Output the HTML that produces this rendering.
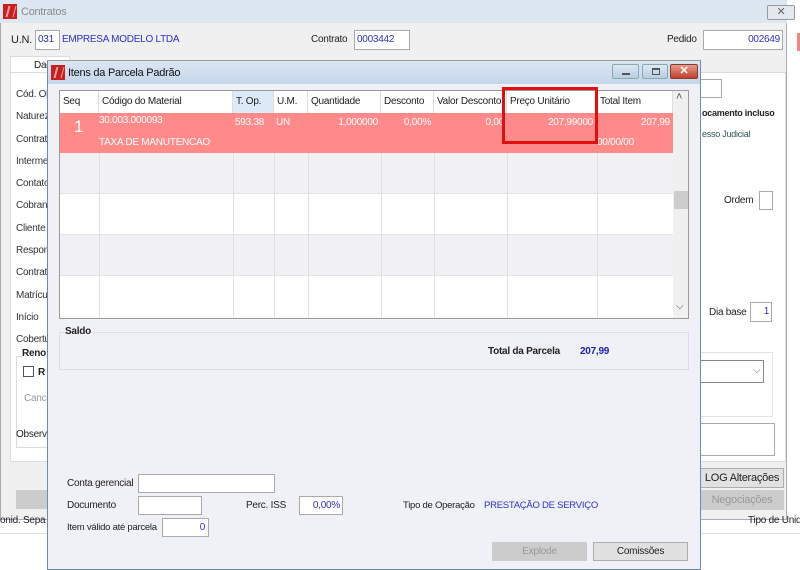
<!DOCTYPE html>
<html><head><meta charset="utf-8"><style>
*{box-sizing:border-box;margin:0;padding:0}
body{width:800px;height:568px;position:relative;overflow:hidden;background:#fff;font-family:"Liberation Sans",sans-serif;font-size:10px;letter-spacing:-0.25px;color:#222;white-space:nowrap}
.a{position:absolute}
.box{position:absolute;background:#fff;border:1px solid #aaa}
.blue{color:#3030c0}
.logo{position:absolute;width:14px;height:15px;background:#c8201c}
.logo:after{content:"";position:absolute;left:4px;top:2px;width:5px;height:11px;border-left:2px solid #f4a0a0;border-right:1px solid #f4a0a0;transform:skewX(-15deg)}
.hd{position:absolute;top:0;height:22px;line-height:22px;padding-left:3px;border-right:1px solid #ddd;font-size:10px;color:#222}
.vl{position:absolute;top:62px;bottom:0;width:1px;background:#e0e0e0}
.btn{position:absolute;border:1px solid #adadad;background:#e1e1e1;text-align:center;font-size:10px}
</style></head><body>
<!-- background window -->
<div class="a" style="left:0;top:0;width:787px;height:520px;background:#f0f0f0;border:1px solid #aab"></div>
<div class="a" style="left:0;top:0;width:787px;height:23px;background:#dde7f2"></div>
<div class="logo" style="left:3px;top:4px"></div>
<div class="a" style="left:21px;top:6px;font-size:11px;color:#8a8a8a">Contratos</div>
<div class="a" style="left:767px;top:5px;width:28px;height:15px;border:1px solid #999;border-radius:2px;background:#e4e8ee;text-align:center;line-height:13px;color:#666;font-size:11px">✕</div>
<div class="a" style="left:797px;top:33px;width:3px;height:18px;background:#e88"></div>
<div class="a" style="left:11px;top:34px;font-size:11px">U.N.</div>
<div class="box blue" style="left:35px;top:30px;width:25px;height:20px;padding:3px 2px;font-size:10px">031</div>
<div class="a blue" style="left:62px;top:34px;font-size:10px">EMPRESA MODELO LTDA</div>
<div class="a" style="left:311px;top:34px;font-size:10px">Contrato</div>
<div class="box blue" style="left:354px;top:30px;width:56px;height:20px;padding:3px 2px">0003442</div>
<div class="a" style="left:667px;top:34px;font-size:10px">Pedido</div>
<div class="box blue" style="left:703px;top:30px;width:80px;height:20px;padding:3px 2px;text-align:right">002649</div>
<div class="a" style="left:10px;top:56px;width:60px;height:16px;background:#fff;border:1px solid #ddd;border-bottom:none"></div>
<div class="a" style="left:34px;top:60px">Dad</div>
<div class="a" style="left:10px;top:72px;width:776px;height:390px;background:#fff;border:1px solid #ddd"></div>
<div class="a" style="left:16px;top:84px;line-height:22.3px;font-size:10px;color:#333">Cód. Ol<br>Naturez<br>Contrat<br>Interme<br>Contato<br>Cobran<br>Cliente<br>Respon<br>Contrat<br>Matrícu<br>Início<br>Cobertu</div>
<div class="a" style="left:16px;top:356px;width:40px;height:92px;border:1px solid #ddd"></div>
<div class="a" style="left:22px;top:348px;font-weight:bold;background:#fff">Reno</div>
<div class="a" style="left:23px;top:366px;width:11px;height:11px;border:1px solid #555"></div>
<div class="a" style="left:38px;top:367px;font-weight:bold">R</div>
<div class="a" style="left:24px;top:393px;color:#999">Cance</div>
<div class="a" style="left:16px;top:429px">Observ</div>
<div class="a" style="left:16px;top:490px;width:40px;height:19px;background:#ccc"></div>
<div class="a" style="left:0;top:515px;font-size:10px">onid. Sepa</div>
<div class="a" style="left:0;top:533px;width:800px;height:1px;background:#ddd"></div>
<div class="box" style="left:700px;top:79px;width:22px;height:19px"></div>
<div class="a" style="left:702px;top:108px;font-weight:bold;font-size:9px">ocamento incluso</div>
<div class="a" style="left:702px;top:129px;font-size:9px;color:#355">esso Judicial</div>
<div class="a" style="left:724px;top:195px">Ordem</div>
<div class="box" style="left:759px;top:191px;width:14px;height:19px"></div>
<div class="a" style="left:709px;top:307px">Dia base</div>
<div class="box blue" style="left:750px;top:302px;width:22px;height:20px;padding:3px 2px;text-align:right">1</div>
<div class="a" style="left:700px;top:352px;width:73px;height:65px;border:1px solid #e4e4e4"></div>
<div class="box" style="left:700px;top:360px;width:64px;height:23px;border-color:#888"></div>
<div class="a" style="left:753px;top:365px;color:#666">⌵</div>
<div class="box" style="left:700px;top:423px;width:75px;height:33px"></div>
<div class="btn" style="left:700px;top:468px;width:84px;height:20px;line-height:18px;font-size:11px">LOG Alterações</div>
<div class="btn" style="left:700px;top:490px;width:84px;height:20px;line-height:18px;color:#999;background:#ccc;border-color:#ccc;font-size:11px">Negociações</div>
<div class="a" style="left:748px;top:515px">Tipo de Unida</div>

<!-- child dialog -->
<div class="a" style="left:47px;top:60px;width:654px;height:510px;background:#f0f1f7;border:1px solid #6a8cb0;border-top-color:#999"></div>
<div class="a" style="left:48px;top:61px;width:652px;height:23px;background:linear-gradient(#dbe6f3,#c5d6ea)"></div>
<div class="logo" style="left:51px;top:65px"></div>
<div class="a" style="left:68px;top:67px;font-size:11px;color:#111">Itens da Parcela Padrão</div>
<div class="a" style="left:612px;top:64px;width:27px;height:15px;border:1px solid #8aa;border-radius:2px;background:linear-gradient(#dde8f4,#b9cde4)"><div class="a" style="left:9px;top:8px;width:8px;height:2px;background:#555"></div></div>
<div class="a" style="left:642px;top:64px;width:26px;height:15px;border:1px solid #8aa;border-radius:2px;background:linear-gradient(#dde8f4,#b9cde4)"><div class="a" style="left:9px;top:3px;width:8px;height:7px;border:1px solid #555;border-top-width:2px"></div></div>
<div class="a" style="left:670px;top:64px;width:28px;height:15px;border:1px solid #8a3a30;border-radius:2px;background:linear-gradient(#e89a8c,#c0402c);color:#fff;text-align:center;font-weight:bold;line-height:13px;font-size:11px">✕</div>

<!-- grid -->
<div class="a" style="left:59px;top:90px;width:630px;height:229px;background:#fff;border:1px solid #999;overflow:hidden">
 <div class="a" style="left:0;top:22px;width:613px;height:40px;background:#fe8a8a"></div>
 <div class="a" style="left:0;top:62px;width:613px;height:41px;background:#f1f1f5"></div>
 <div class="a" style="left:0;top:144px;width:613px;height:41px;background:#f1f1f5"></div>
 <div class="a" style="left:0;top:102px;width:613px;height:1px;background:#e4e4e4"></div>
 <div class="a" style="left:0;top:143px;width:613px;height:1px;background:#e4e4e4"></div>
 <div class="a" style="left:0;top:184px;width:613px;height:1px;background:#e4e4e4"></div>
 <div class="hd" style="left:0;width:39px">Seq</div>
 <div class="hd" style="left:39px;width:134px">Código do Material</div>
 <div class="hd" style="left:173px;width:41px;background:#dceaf7">T. Op.</div>
 <div class="hd" style="left:214px;width:34px">U.M.</div>
 <div class="hd" style="left:248px;width:73px">Quantidade</div>
 <div class="hd" style="left:321px;width:53px">Desconto</div>
 <div class="hd" style="left:374px;width:73px">Valor Desconto</div>
 <div class="hd" style="left:447px;width:90px">Preço Unitário</div>
 <div class="hd" style="left:537px;width:76px">Total Item</div>
 <div class="vl" style="left:39px"></div><div class="vl" style="left:173px"></div><div class="vl" style="left:214px"></div><div class="vl" style="left:248px"></div><div class="vl" style="left:321px"></div><div class="vl" style="left:374px"></div><div class="vl" style="left:447px"></div><div class="vl" style="left:537px"></div>
 <div class="a" style="left:14px;top:26px;color:#fff;font-size:17px">1</div>
 <div class="a" style="left:39px;top:24px;color:#fff">30.003.000093</div>
 <div class="a" style="left:39px;top:46px;color:#fff">TAXA DE MANUTENCAO</div>
 <div class="a" style="left:175px;top:26px;color:#fff">593.38</div>
 <div class="a" style="left:216px;top:26px;color:#fff">UN</div>
 <div class="a" style="left:248px;top:26px;width:70px;text-align:right;color:#fff">1,000000</div>
 <div class="a" style="left:321px;top:26px;width:50px;text-align:right;color:#fff">0,00%</div>
 <div class="a" style="left:374px;top:26px;width:70px;text-align:right;color:#fff">0,00</div>
 <div class="a" style="left:447px;top:26px;width:86px;text-align:right;color:#fff">207,99000</div>
 <div class="a" style="left:537px;top:26px;width:73px;text-align:right;color:#fff">207,99</div>
 <div class="a" style="left:537px;top:46px;color:#fff">00/00/00</div>
 <div class="a" style="left:613px;top:0;width:17px;height:229px;background:#f0f0f0"></div>
 <div class="a" style="left:616px;top:0;color:#555;font-size:11px">˄</div>
 <div class="a" style="left:614px;top:100px;width:14px;height:18px;background:#cdcdcd"></div>
 <div class="a" style="left:616px;top:210px;color:#555;font-size:10px">⌵</div>
</div>
<div class="a" style="left:502px;top:87px;width:96px;height:57px;border:3px solid #e01010"></div>

<div class="a" style="left:59px;top:332px;width:630px;height:38px;border:1px solid #dcdde6"></div>
<div class="a" style="left:65px;top:326px;font-weight:bold;background:#f0f1f7;padding-right:3px">Saldo</div>
<div class="a" style="left:488px;top:346px;font-weight:bold">Total da Parcela</div>
<div class="a blue" style="left:580px;top:346px;font-weight:bold;color:#2020b0">207,99</div>

<div class="a" style="left:67px;top:478px">Conta gerencial</div>
<div class="box" style="left:138px;top:474px;width:137px;height:19px"></div>
<div class="a" style="left:67px;top:500px">Documento</div>
<div class="box" style="left:138px;top:496px;width:64px;height:19px"></div>
<div class="a" style="left:246px;top:500px">Perc. ISS</div>
<div class="box blue" style="left:299px;top:496px;width:44px;height:19px;padding:3px 2px;text-align:right">0,00%</div>
<div class="a" style="left:403px;top:500px;font-size:9.5px">Tipo de Operação</div>
<div class="a blue" style="left:484px;top:500px;font-size:9.5px">PRESTAÇÃO DE SERVIÇO</div>
<div class="a" style="left:67px;top:522px;font-size:9.5px">Item válido até parcela</div>
<div class="box blue" style="left:162px;top:518px;width:47px;height:19px;padding:3px 3px;text-align:right">0</div>
<div class="btn" style="left:492px;top:542px;width:95px;height:19px;line-height:17px;color:#999;background:#ccc;border-color:#ccc">Explode</div>
<div class="btn" style="left:593px;top:542px;width:95px;height:19px;line-height:17px">Comissões</div>
</body></html>
